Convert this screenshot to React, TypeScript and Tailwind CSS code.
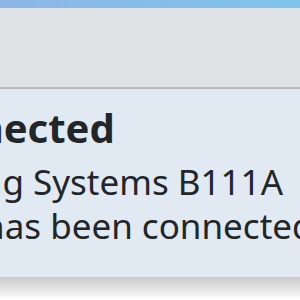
export default function App() {
  return (
    <div className="flex h-[300px] w-[300px] flex-col overflow-hidden bg-white font-['Noto_Sans',sans-serif] text-[#232629]">
      <div className="h-[8px] shrink-0 bg-gradient-to-r from-[#8cb6e6] via-[#86bdea] to-[#80c4ee]" />
      <div className="h-[79px] shrink-0 bg-[#dfe2e4]" />
      <div className="h-[2px] shrink-0 bg-[#b8babb]" />
      <div className="flex h-[188px] shrink-0 flex-col bg-[#e1e9f2] pt-[19px]">
        <div className="ml-[-99px] whitespace-nowrap text-[40px] font-bold leading-[40px]">Connected</div>
        <div className="ml-[-114px] mt-[12px] whitespace-nowrap text-[35px] leading-[44px]">Imaging Systems B111A</div>
        <div className="ml-[-17px] whitespace-nowrap text-[35px] leading-[44px]">has been connected.</div>
      </div>
      <div className="flex-1 bg-gradient-to-b from-[#c9c9c9] to-[#ffffff]" />
    </div>
  );
}
